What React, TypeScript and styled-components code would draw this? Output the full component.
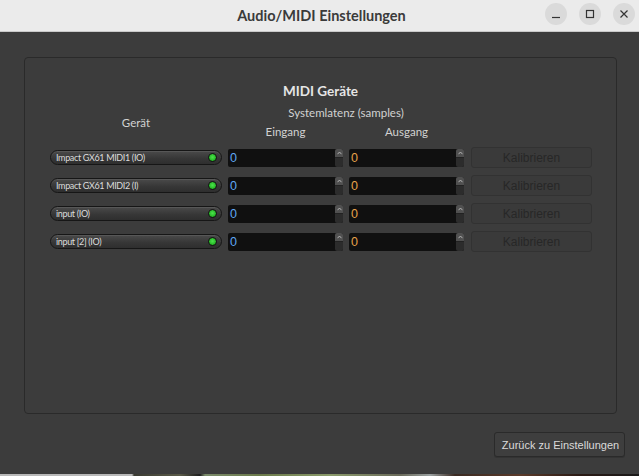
import React from "react";
import styled, { createGlobalStyle } from "styled-components";

const Global = createGlobalStyle`
  html, body { margin: 0; padding: 0; background: #3c3c3c; }
  body { font-family: "Lato", "Liberation Sans", sans-serif; }
  * { box-sizing: border-box; }
`;

const Window = styled.div`
  width: 639px;
  height: 476px;
  display: flex;
  flex-direction: column;
  background: #3c3c3c;
  overflow: hidden;
`;

const TitleBar = styled.div`
  height: 32px;
  flex: none;
  background: #ebebeb;
  border-bottom: 1px solid #c9c9c9;
  display: flex;
  align-items: center;
  position: relative;
`;

const Title = styled.div`
  flex: 1;
  text-align: center;
  font-family: "Lato", "Liberation Sans", sans-serif;
  font-weight: 700;
  font-size: 14.5px;
  color: #3a3a3a;
  padding-left: 4px;
`;

const WinControls = styled.div`
  position: absolute;
  right: 4px;
  top: 3px;
  display: flex;
  gap: 12px;
`;

const WinBtn = styled.div`
  width: 22px;
  height: 22px;
  border-radius: 50%;
  background: #dadada;
  display: flex;
  align-items: center;
  justify-content: center;
`;

const Content = styled.div`
  flex: 1;
  display: flex;
  flex-direction: column;
  padding: 25px 14px 0 24px;
`;

const Panel = styled.div`
  height: 357px;
  margin-right: 8px;
  border: 1px solid #2a2a2a;
  border-radius: 4px;
  padding: 25px 0 0 25px;
  display: flex;
  flex-direction: column;
`;

const PanelTitle = styled.div`
  height: 23px;
  margin-right: 25px;
  text-align: center;
  font-weight: 700;
  font-size: 13.5px;
  line-height: 16px;
  color: #e6e6e6;
`;

const Grid = styled.div`
  display: grid;
  grid-template-columns: 172px 115px 115px 122px;
  grid-template-rows: 19px 22px repeat(4, 28px);
  column-gap: 6px;
  align-items: start;
`;

const Header = styled.div<{ $col: string; $row: string; $pad?: number }>`
  grid-column: ${(p) => p.$col};
  grid-row: ${(p) => p.$row};
  text-align: center;
  font-size: 11.5px;
  line-height: 14px;
  color: #d2d2d2;
  padding-top: ${(p) => p.$pad ?? 0}px;
`;

const Cell = styled.div<{ $row: number; $col: number }>`
  grid-row: ${(p) => p.$row};
  grid-column: ${(p) => p.$col};
  height: 21px;
  display: flex;
  align-items: center;
`;

const Pill = styled.div`
  width: 172px;
  height: 15px;
  border-radius: 8px;
  border: 1px solid #161616;
  background: linear-gradient(#4a4a4a, #363636 60%, #2e2e2e);
  display: flex;
  align-items: center;
  padding: 0 4px 0 5px;
  box-shadow: inset 0 1px 0 rgba(255,255,255,0.08);
`;

const PillLabel = styled.span`
  flex: 1;
  font-family: "Lato", "Liberation Sans", sans-serif;
  font-size: 9px;
  letter-spacing: -0.35px;
  color: #dcdcdc;
  white-space: nowrap;
`;

const Led = styled.span`
  width: 9px;
  height: 9px;
  border-radius: 50%;
  background: radial-gradient(circle at 50% 45%, #4ee24e, #22b522 70%);
  border: 1.5px solid #111;
  flex: none;
`;

const Spin = styled.div`
  width: 115px;
  height: 18px;
  background: #101010;
  display: flex;
  border-radius: 2px;
`;

const SpinValue = styled.div<{ $color: string }>`
  flex: 1;
  padding-left: 2px;
  font-family: "Liberation Sans", sans-serif;
  font-size: 12.5px;
  line-height: 18px;
  color: ${(p) => p.$color};
`;

const Arrows = styled.div`
  width: 8px;
  display: flex;
  flex-direction: column;
`;

const ArrowUp = styled.div`
  flex: 1;
  background: #505050;
  border-radius: 2px 2px 0 0;
  display: flex;
  align-items: center;
  justify-content: center;
`;

const ArrowDown = styled.div`
  flex: 1;
  background: #2c2c2c;
  border-radius: 0 0 2px 2px;
  border-top: 1px solid #222;
`;

const CalButton = styled.div`
  width: 121px;
  height: 21px;
  margin-left: 1px;
  border: 1px solid #323232;
  border-radius: 3px;
  background: #3a3a3a;
  display: flex;
  align-items: center;
  justify-content: center;
  font-family: "Liberation Sans", sans-serif;
  font-size: 12px;
  color: #272727;
`;

const Footer = styled.div`
  display: flex;
  justify-content: flex-end;
  padding-top: 18px;
`;

const BackButton = styled.div`
  width: 131px;
  height: 25px;
  border: 1px solid #2a2a2a;
  border-radius: 3px;
  background: #3e3e3e;
  display: flex;
  align-items: center;
  justify-content: center;
  padding-left: 2px;
  font-family: "Liberation Sans", sans-serif;
  font-size: 11px;
  color: #dadada;
  box-shadow: 0 1px 0 #333;
`;

const Wallpaper = styled.div`
  height: 2px;
  flex: none;
  background: linear-gradient(
    90deg,
    #b9b9b9 0,
    #b9b9b9 132px,
    #3a3a32 134px,
    #5a5a48 180px,
    #1e1e1e 200px,
    #7a8a6a 205px,
    #6b7a4a 260px,
    #8a9a6a 330px,
    #6a6a5a 400px,
    #9aa0a0 430px,
    #3a2a22 455px,
    #5a3a2a 520px,
    #2a1a14 580px,
    #1a1a1a 639px
  );
`;

const rows = [
  "Impact GX61 MIDI1 (IO)",
  "Impact GX61 MIDI2 (I)",
  "input (IO)",
  "input [2] (IO)",
];

const UpGlyph = () => (
  <svg width="5" height="4" viewBox="0 0 5 4">
    <path d="M0.5 3.2 L2.5 1 L4.5 3.2" fill="none" stroke="#bdbdbd" strokeWidth="0.9" />
  </svg>
);

const SpinBox: React.FC<{ color: string }> = ({ color }) => (
  <Spin>
    <SpinValue $color={color}>0</SpinValue>
    <Arrows>
      <ArrowUp>
        <UpGlyph />
      </ArrowUp>
      <ArrowDown />
    </Arrows>
  </Spin>
);

export default function App() {
  return (
    <Window>
      <Global />
      <TitleBar>
        <Title>Audio/MIDI Einstellungen</Title>
        <WinControls>
          <WinBtn>
            <svg width="10" height="10" viewBox="0 0 10 10">
              <path d="M1 8.5 H9" stroke="#333" strokeWidth="1.2" />
            </svg>
          </WinBtn>
          <WinBtn>
            <svg width="10" height="10" viewBox="0 0 10 10">
              <rect x="1.5" y="1.5" width="7" height="7" fill="none" stroke="#333" strokeWidth="1.2" />
            </svg>
          </WinBtn>
          <WinBtn>
            <svg width="10" height="10" viewBox="0 0 10 10">
              <path d="M1.5 1.5 L8.5 8.5 M8.5 1.5 L1.5 8.5" stroke="#333" strokeWidth="1.2" />
            </svg>
          </WinBtn>
        </WinControls>
      </TitleBar>
      <Content>
        <Panel>
          <PanelTitle>MIDI Geräte</PanelTitle>
          <Grid>
            <Header $col="1" $row="1 / 3" $pad={10}>
              Gerät
            </Header>
            <Header $col="2 / 4" $row="1">
              Systemlatenz (samples)
            </Header>
            <Header $col="2" $row="2">
              Eingang
            </Header>
            <Header $col="3" $row="2">
              Ausgang
            </Header>
            {rows.map((name, i) => (
              <React.Fragment key={name}>
                <Cell $row={i + 3} $col={1}>
                  <Pill>
                    <PillLabel>{name}</PillLabel>
                    <Led />
                  </Pill>
                </Cell>
                <Cell $row={i + 3} $col={2}>
                  <SpinBox color="#5fa8f5" />
                </Cell>
                <Cell $row={i + 3} $col={3}>
                  <SpinBox color="#e6a24a" />
                </Cell>
                <Cell $row={i + 3} $col={4}>
                  <CalButton>Kalibrieren</CalButton>
                </Cell>
              </React.Fragment>
            ))}
          </Grid>
        </Panel>
        <Footer>
          <BackButton>Zurück zu Einstellungen</BackButton>
        </Footer>
      </Content>
      <Wallpaper />
    </Window>
  );
}
